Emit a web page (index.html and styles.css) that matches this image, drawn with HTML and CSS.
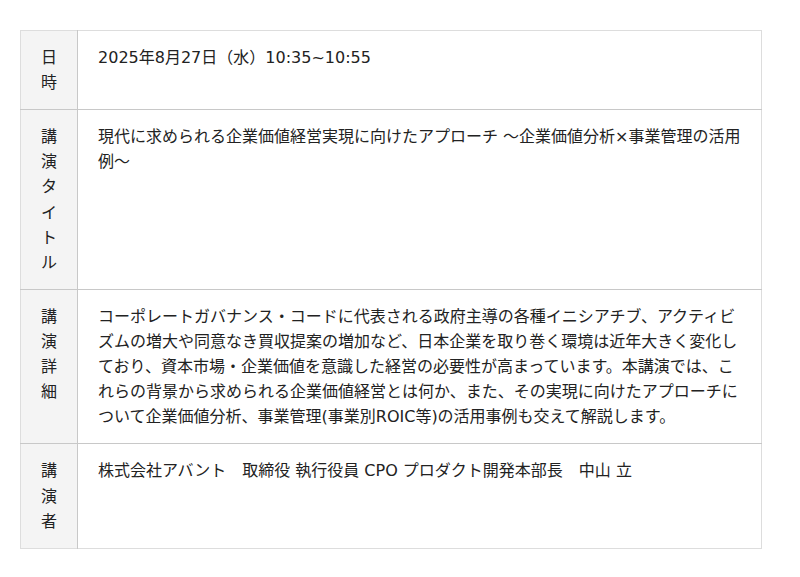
FILE: index.html
```html
<!DOCTYPE html>
<html lang="ja">
<head>
    <meta charset="UTF-8">
    <meta name="viewport" content="width=device-width, initial-scale=1.0">
    <title>講演概要</title>
    <link rel="stylesheet" href="styles.css">
</head>
<body>
    <table class="seminar-table">
        <tr>
            <th>日時</th>
            <td>2025年8月27日（水）10:35~10:55</td>
        </tr>
        <tr>
            <th>講演タイトル</th>
            <td>現代に求められる企業価値経営実現に向けたアプローチ ～企業価値分析×事業管理の活用例～</td>
        </tr>
        <tr>
            <th>講演詳細</th>
            <td>コーポレートガバナンス・コードに代表される政府主導の各種イニシアチブ、アクティビズムの増大や同意なき買収提案の増加など、日本企業を取り巻く環境は近年大きく変化しており、資本市場・企業価値を意識した経営の必要性が高まっています。本講演では、これらの背景から求められる企業価値経営とは何か、また、その実現に向けたアプローチについて企業価値分析、事業管理(事業別ROIC等)の活用事例も交えて解説します。</td>
        </tr>
        <tr>
            <th>講演者</th>
            <td>株式会社アバント　取締役 執行役員 CPO プロダクト開発本部長　中山 立</td>
        </tr>
    </table>
</body>
</html>
```

FILE: styles.css
```css
body {
    margin: 0;
    padding: 30px 0 0 20px;
    background: #fff;
    color: #222;
    font-family: 'DejaVu Sans', 'Noto Sans CJK JP', sans-serif;
    font-size: 16px;
    line-height: 1.57;
}

.seminar-table {
    width: 742px;
    border-collapse: collapse;
    border: 1px solid #ddd;
}

.seminar-table th,
.seminar-table td {
    padding: 14px 20px;
    vertical-align: top;
    border-top: 1px solid #c8c8c8;
}

.seminar-table tr:first-child th,
.seminar-table tr:first-child td {
    border-top: 1px solid #ddd;
}

.seminar-table th {
    width: 16px;
    background-color: #f4f4f4;
    border-right: 1px solid #c8c8c8;
    font-weight: normal;
    text-align: center;
    word-break: break-all;
}

.seminar-table td {
    text-align: left;
}
```
